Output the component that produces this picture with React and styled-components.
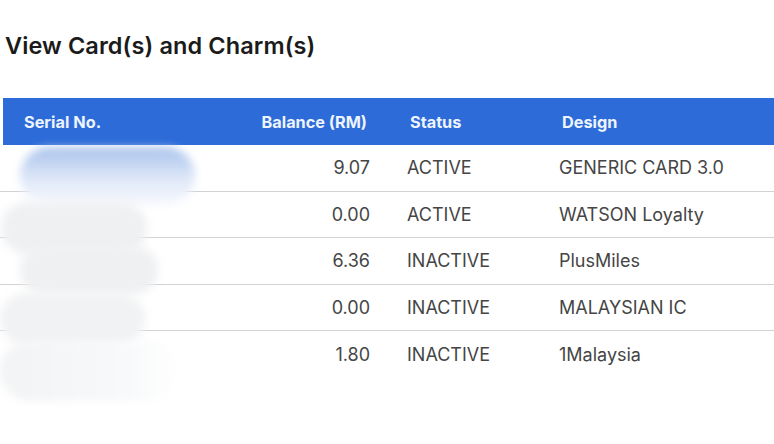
import React from "react";
import styled, { createGlobalStyle } from "styled-components";

const Global = createGlobalStyle`
  html, body { margin: 0; padding: 0; background: #fff; }
  body { font-family: Inter, "Noto Sans", "Liberation Sans", sans-serif; }
`;

const Page = styled.div`
  width: 774px;
  height: 444px;
  overflow: hidden;
  padding: 29px 0 0 3px;
  box-sizing: border-box;
`;

const Title = styled.h1`
  margin: 0 0 0 2px;
  font-size: 23.5px;
  line-height: 34px;
  font-weight: 600;
  color: #1b1b1b;
  letter-spacing: 0.1px;
`;

const Table = styled.div`
  position: relative;
  margin-top: 35px;
  width: 771px;
`;

const Grid = `
  display: grid;
  grid-template-columns: 222px 160px 155px 1fr;
  align-items: center;
`;

const HeaderRow = styled.div`
  ${Grid}
  height: 47px;
  background: #2c6bd8;
  color: #eef4fd;
  font-weight: 700;
  font-size: 16.3px;
`;

const Row = styled.div`
  ${Grid}
  box-sizing: border-box;
  height: 46.6px;
  border-bottom: ${(p) => (p.$last ? "none" : "1px solid #d2d2d2")};
  margin-left: -3px;
  padding-left: 3px;
  color: #454545;
  font-size: 18px;
`;

const Cell = styled.div`
  text-align: ${(p) => (p.$right ? "right" : "left")};
  padding-left: ${(p) => p.$pl || 0}px;
  padding-right: ${(p) => p.$pr || 0}px;
  white-space: nowrap;
`;

const Blob = styled.div`
  position: absolute;
  border-radius: 40px;
  filter: blur(4px);
  pointer-events: none;
`;

const rows = [
  ["9.07", "ACTIVE", "GENERIC CARD 3.0"],
  ["0.00", "ACTIVE", "WATSON Loyalty"],
  ["6.36", "INACTIVE", "PlusMiles"],
  ["0.00", "INACTIVE", "MALAYSIAN IC"],
  ["1.80", "INACTIVE", "1Malaysia"],
];

const blobs = [
  { left: 17, top: 49, width: 175, height: 58, background: "linear-gradient(#a8c2ec, #dfe8f8 55%, #f7f9fd)" },
  { left: -2, top: 104, width: 146, height: 52, background: "#eff0f2" },
  { left: 17, top: 148, width: 138, height: 48, background: "#eff0f2" },
  { left: -3, top: 195, width: 145, height: 52, background: "#f1f2f3" },
  { left: -3, top: 243, width: 180, height: 60, background: "linear-gradient(90deg, #f2f3f4, #f8f9fb 70%, #fff)" },
];

export default function App() {
  return (
    <Page>
      <Global />
      <Title>View Card(s) and Charm(s)</Title>
      <Table>
        <HeaderRow>
          <Cell $pl={21}>Serial No.</Cell>
          <Cell $right $pr={18}>Balance (RM)</Cell>
          <Cell $pl={25}>Status</Cell>
          <Cell $pl={22}>Design</Cell>
        </HeaderRow>
        {rows.map((r, i) => (
          <Row key={i} $last={i === rows.length - 1}>
            <Cell $pl={21}></Cell>
            <Cell $right $pr={15}>{r[0]}</Cell>
            <Cell $pl={22}>{r[1]}</Cell>
            <Cell $pl={19}>{r[2]}</Cell>
          </Row>
        ))}
        {blobs.map((b, i) => (
          <Blob key={i} style={b} />
        ))}
      </Table>
    </Page>
  );
}
